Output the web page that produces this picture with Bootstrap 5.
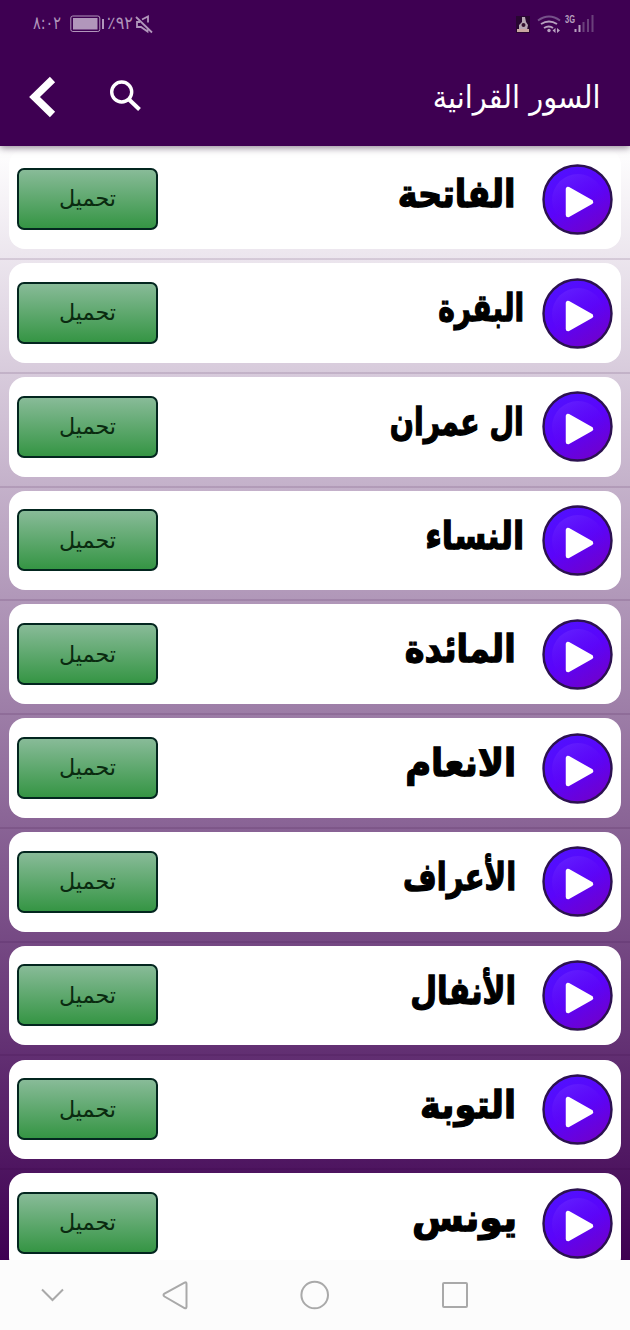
<!DOCTYPE html>
<html lang="ar" dir="rtl">
<head>
<meta charset="utf-8">
<meta name="viewport" content="width=device-width, initial-scale=1">
<title>السور القرانية</title>
<link href="https://cdn.jsdelivr.net/npm/bootstrap@5.3.0/dist/css/bootstrap.min.css" rel="stylesheet">
<style>
  body { font-family: "DejaVu Sans", sans-serif; background: #3e0052; height: 1330px; overflow: hidden; }
  svg { display: block; flex: none; }
  .app-head { height: 146px; background: #3e0052; position: relative; z-index: 2; box-shadow: 0 2px 7px rgba(40,20,50,.5); }
  .status-bar { height: 48px; padding: 0 35px 0 33px; color: #b196bb; font-size: 18px; line-height: 46px; }
  .status-bar bdo { display: block; flex: none; transform-origin: left center; white-space: nowrap; }
  .title-bar { height: 98px; padding: 0 29px 0 26px; }
  .app-title { font-size: 31px; line-height: 40px; font-weight: 400; white-space: nowrap; transform-origin: right center; }
  .surah-list { height: 1114px; overflow: hidden; background: linear-gradient(#fff, #3e0052); padding-top: 3.4px; }
  .surah-row { height: 113.78px; padding: 0 9px; }
  .surah-card { height: 99.6px; border-radius: 16px; background: #fff; padding: 0 8px; }
  .surah-row hr { margin: 9px -9px 0; height: 2px; border: 0; background: #32003c; opacity: .12; }
  .play-btn { margin-top: 14.4px; width: 71px; height: 71px; }
  .name-cell { height: 99px; }
  .surah-name { color: #000; font-weight: 700; font-size: 38px; line-height: 50px; white-space: nowrap; transform-origin: right center; -webkit-text-stroke: 1.3px #000; }
  .dl-btn { width: 141px; height: 62px; margin-top: 18.6px; border: 2.5px solid #03261f; border-radius: 7px; background: linear-gradient(#88bb98, #359544); color: #0a2a10; font-size: 23px; line-height: 57px; padding: 0; }
  .nav-keys { height: 70px; background: #fcfcfc; }
</style>
</head>
<body>
<header class="app-head">
  <div class="status-bar d-flex align-items-start" dir="ltr">
    <bdo dir="ltr" data-fit="28" style="width:28px">٨:٠٢</bdo>
    <svg style="margin:15px 0 0 9px" width="35" height="18" viewBox="0 0 35 18" fill="none" stroke="#b196bb"><rect x=".8" y="1" width="29" height="15.5" rx="2"/><rect x="3" y="3" width="24.5" height="11.5" fill="#b196bb" stroke="none"/><path d="M33 4v10" stroke-width="2"/></svg>
    <bdo dir="ltr" data-fit="26" style="width:27px;margin-left:2px">٪٩٢</bdo>
    <svg style="margin:14px 0 0 1px" width="20" height="21" viewBox="0 0 20 21" fill="none" stroke="#b196bb" stroke-width="1.8"><path d="M7 5.500L13 2.500V8.500M12.500 15.500V17.500L6 13H2V8H5M1 3L17 18.500"/></svg>
    <svg class="ms-auto" style="margin-top:14px" width="80" height="20" viewBox="0 -2 80 20"><rect width="14" height="17" x="1" fill="#280631"/><path d="M7 1h3l1 5 2 3-1 5H4V9l3-3z" fill="#b6a7b2"/><circle cx="8.5" cy="9" r="2" fill="#31102c"/><path d="M2 13h12v3H2z" fill="#c9a6a0"/>
      <g fill="none" stroke="#b7a0bf" stroke-width="2"><path d="M23 4.500q11-8 22 0" stroke="#76518a"/><path d="M26 8q8-5 16 0M29 12q5-3 9 0"/></g><circle cx="34" cy="14.500" r="1.700" fill="#b7a0bf"/><path d="M40.500 12l-3 2.500 3 2.500zM42 12l3 2.500-3 2.500z" fill="#b7a0bf"/>
      <text x="50" y="7" direction="ltr" font-family="Liberation Sans" font-weight="700" font-size="10" textLength="10" lengthAdjust="spacingAndGlyphs" fill="#b7a0bf">3G</text>
      <path d="M60.500 13v3M64.500 9v7" stroke="#b7a0bf" stroke-width="2"/><path d="M68.500 6v10M73 3v13M77.500-1v17" stroke="#6a407b" stroke-width="2"/></svg>
  </div>
  <div class="title-bar d-flex align-items-center text-white" dir="ltr">
    <svg width="32" height="48" viewBox="0 0 32 48" fill="none" stroke="#fff" stroke-width="7.500"><path d="M26.500 6.500L8.500 24L26.500 41.500"/></svg>
    <svg style="margin-left:50px;margin-top:-2px" width="36" height="36" viewBox="0 0 36 36" fill="none" stroke="#fff" stroke-width="3.400"><circle cx="13.700" cy="14" r="10"/><path d="M21 21.500L31.500 31.500" stroke-width="4"/></svg>
    <h1 class="app-title ms-auto mb-0" dir="rtl" data-fit="168">السور القرانية</h1>
  </div>
</header>
<main class="surah-list" id="list"></main>
<nav class="nav-keys" dir="ltr">
  <svg width="630" height="70" viewBox="0 0 630 70" fill="none" stroke="#a9a9a9" stroke-width="2"><path d="M42 29.500L52.500 40L63 29.500"/><path d="M185 22.500Q186.500 21.500 186.500 24V46.500Q186.500 49 184.500 48L164.500 36.500Q162.500 35 164.500 33.500Z"/><circle cx="314.700" cy="35" r="13.300"/><rect x="443" y="23" width="24" height="24" rx="1"/></svg>
</nav>
<svg width="0" height="0" style="position:absolute"><defs>
  <linearGradient id="pg" x1="0.2" y1="0" x2=".8" y2="1"><stop offset="0" stop-color="#5012ff"/><stop offset=".5" stop-color="#5a04fa"/><stop offset="1" stop-color="#7200c8"/></linearGradient>
  <linearGradient id="pi" x1="0.2" y1="0" x2=".7" y2="1"><stop offset="0" stop-color="#6320ff"/><stop offset=".6" stop-color="#5d05f5" stop-opacity=".3"/><stop offset="1" stop-color="#6a00d5" stop-opacity="0"/></linearGradient>
</defs></svg>
<script>
  // name, drawn width, gap between the name and the play button
  const surahs = [
    ['الفاتحة',118,26],['البقرة',86,18],['ال عمران',134,18],['النساء',99,18],['المائدة',111,26],
    ['الانعام',111,26],['الأعراف',113,26],['الأنفال',106,26],['التوبة',96,26],['يونس',105,25]];
  document.getElementById('list').innerHTML = surahs.map(([n, w, g]) => `
    <div class="surah-row"><div class="surah-card d-flex align-items-start">
      <svg class="play-btn" viewBox="0 0 71 71"><circle cx="35.500" cy="35.500" r="34" fill="url(#pg)" stroke="#2c1250" stroke-width="2.400"/><circle cx="36" cy="36" r="26" fill="url(#pi)"/><path d="M26 25v26L49 38z" fill="#fff" stroke="#fff" stroke-width="4.500" stroke-linejoin="round"/></svg>
      <div class="name-cell" style="margin-right:${g}px"><div class="surah-name" style="margin-top:20px" data-fit="${w}">${n}</div></div>
      <button class="btn dl-btn me-auto" type="button"><span class="d-inline-block" data-fit="57">تحميل</span></button>
    </div><hr></div>`).join('');
  // squeeze each marked text to its set width
  document.querySelectorAll('[data-fit]').forEach(e => {
    const r = document.createRange(); r.selectNodeContents(e);
    e.style.transform = `scaleX(${e.dataset.fit / r.getBoundingClientRect().width})`;
  });
</script>
<script src="https://cdn.jsdelivr.net/npm/bootstrap@5.3.0/dist/js/bootstrap.bundle.min.js"></script>
</body>
</html>
